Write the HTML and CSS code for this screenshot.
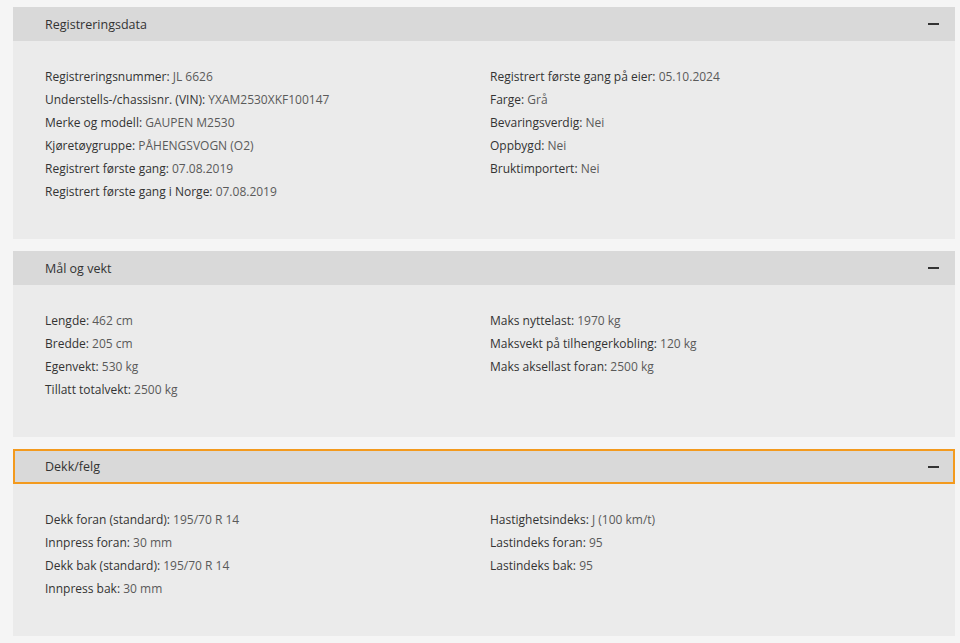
FILE: index.html
```html
<!DOCTYPE html>
<html lang="no">
<head>
<meta charset="utf-8">
<link rel="stylesheet" href="styles.css">
</head>
<body>
<div class="page">
  <section class="panel">
    <div class="head"><span>Registreringsdata</span><span class="minus"></span></div>
    <div class="body">
      <div class="col">
        <div class="row"><b>Registreringsnummer:</b> JL 6626</div>
        <div class="row"><b>Understells-/chassisnr. (VIN):</b> YXAM2530XKF100147</div>
        <div class="row"><b>Merke og modell:</b> GAUPEN M2530</div>
        <div class="row"><b>Kjøretøygruppe:</b> PÅHENGSVOGN (O2)</div>
        <div class="row"><b>Registrert første gang:</b> 07.08.2019</div>
        <div class="row"><b>Registrert første gang i Norge:</b> 07.08.2019</div>
      </div>
      <div class="col">
        <div class="row"><b>Registrert første gang på eier:</b> 05.10.2024</div>
        <div class="row"><b>Farge:</b> Grå</div>
        <div class="row"><b>Bevaringsverdig:</b> Nei</div>
        <div class="row"><b>Oppbygd:</b> Nei</div>
        <div class="row"><b>Bruktimportert:</b> Nei</div>
      </div>
    </div>
  </section>
  <section class="panel">
    <div class="head"><span>Mål og vekt</span><span class="minus"></span></div>
    <div class="body">
      <div class="col">
        <div class="row"><b>Lengde:</b> 462 cm</div>
        <div class="row"><b>Bredde:</b> 205 cm</div>
        <div class="row"><b>Egenvekt:</b> 530 kg</div>
        <div class="row"><b>Tillatt totalvekt:</b> 2500 kg</div>
      </div>
      <div class="col">
        <div class="row"><b>Maks nyttelast:</b> 1970 kg</div>
        <div class="row"><b>Maksvekt på tilhengerkobling:</b> 120 kg</div>
        <div class="row"><b>Maks aksellast foran:</b> 2500 kg</div>
      </div>
    </div>
  </section>
  <section class="panel">
    <div class="head focus"><span>Dekk/felg</span><span class="minus"></span></div>
    <div class="body">
      <div class="col">
        <div class="row"><b>Dekk foran (standard):</b> 195/70 R 14</div>
        <div class="row"><b>Innpress foran:</b> 30 mm</div>
        <div class="row"><b>Dekk bak (standard):</b> 195/70 R 14</div>
        <div class="row"><b>Innpress bak:</b> 30 mm</div>
      </div>
      <div class="col">
        <div class="row"><b>Hastighetsindeks:</b> J (100 km/t)</div>
        <div class="row"><b>Lastindeks foran:</b> 95</div>
        <div class="row"><b>Lastindeks bak:</b> 95</div>
      </div>
    </div>
  </section>
</div>
</body>
</html>
```
FILE: styles.css
```css
html, body {
  margin: 0;
  padding: 0;
  background: #f5f5f5;
}
body {
  font-family: "Open Sans", "Liberation Sans", sans-serif;
  font-size: 12px;
  color: #5a5a5a;
}
.page {
  padding: 7px 5px 7px 13px;
  display: flex;
  flex-direction: column;
  gap: 12px;
}
.panel {
  background: #ebebeb;
}
.head {
  height: 34px;
  background: #d9d9d9;
  display: flex;
  align-items: center;
  justify-content: space-between;
  padding: 0 15px 0 31px;
  color: #333;
  font-size: 12.5px;
  box-sizing: border-box;
  border: 1px solid transparent;
}
.head.focus {
  border: 2px solid #f39a1e;
  height: 35px;
  padding-left: 30px;
  padding-right: 14px;
}
.minus {
  width: 11px;
  height: 2px;
  background: #333;
}
.body {
  display: grid;
  grid-template-columns: 445px 1fr;
  padding: 24px 32px 36px 32px;
}
.row {
  line-height: 23px;
  white-space: nowrap;
}
.row b {
  font-weight: normal;
  color: #333;
}
```
